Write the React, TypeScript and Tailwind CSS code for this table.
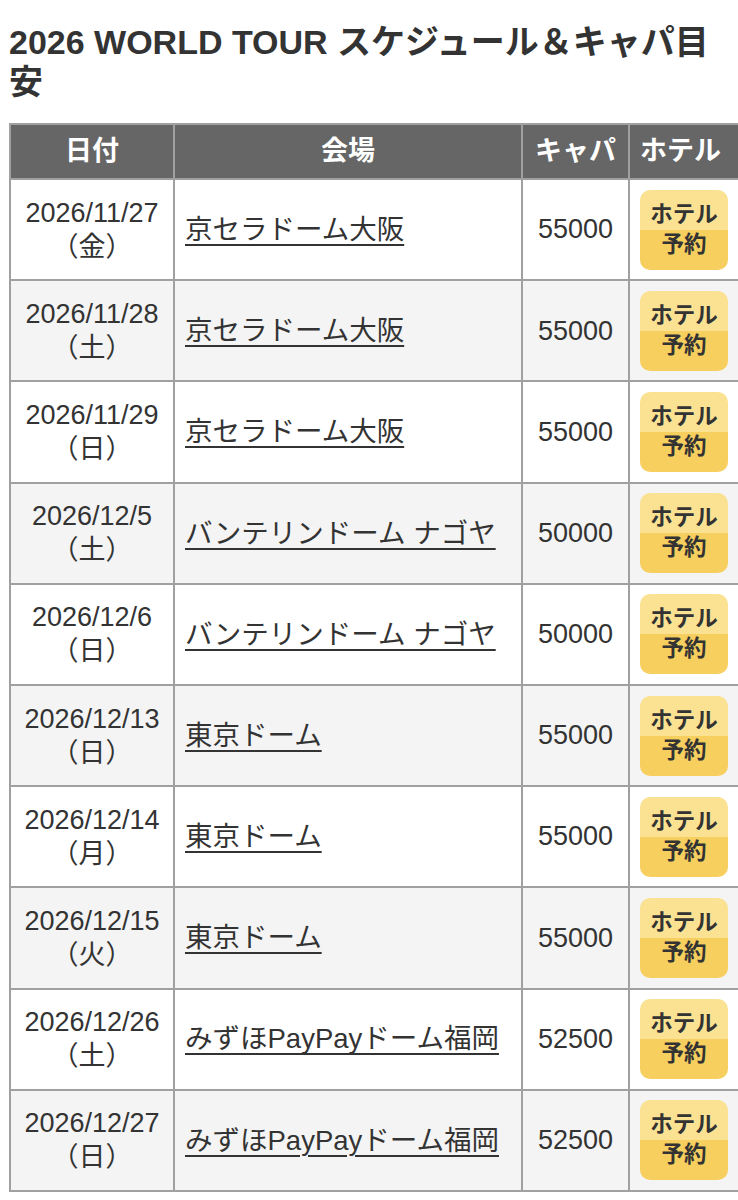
import React from "react"

type Show = {
  date: string
  day: string
  venue: string
  cap: string
}

const shows: Show[] = [
  { date: "2026/11/27", day: "金", venue: "京セラドーム大阪", cap: "55000" },
  { date: "2026/11/28", day: "土", venue: "京セラドーム大阪", cap: "55000" },
  { date: "2026/11/29", day: "日", venue: "京セラドーム大阪", cap: "55000" },
  { date: "2026/12/5", day: "土", venue: "バンテリンドーム ナゴヤ", cap: "50000" },
  { date: "2026/12/6", day: "日", venue: "バンテリンドーム ナゴヤ", cap: "50000" },
  { date: "2026/12/13", day: "日", venue: "東京ドーム", cap: "55000" },
  { date: "2026/12/14", day: "月", venue: "東京ドーム", cap: "55000" },
  { date: "2026/12/15", day: "火", venue: "東京ドーム", cap: "55000" },
  { date: "2026/12/26", day: "土", venue: "みずほPayPayドーム福岡", cap: "52500" },
  { date: "2026/12/27", day: "日", venue: "みずほPayPayドーム福岡", cap: "52500" },
]

function HotelButton() {
  return (
    <a
      href="#"
      className="flex h-[80px] w-[88px] flex-col items-center justify-center rounded-[10px] bg-[linear-gradient(#fbe293_50%,#f7cf5e_50%)] text-[22.5px] leading-[30px] font-bold text-[#333]"
    >
      <span>ホテル</span>
      <span>予約</span>
    </a>
  )
}

export default function App() {
  return (
    <div className="w-[738px] overflow-hidden bg-white font-['Liberation_Sans','Noto_Sans_CJK_JP',sans-serif] text-[#333]">
      <h2 className="w-[722px] pt-[22px] pl-[9px] text-[34px] leading-[40px] font-bold text-[#333]">
        2026 WORLD TOUR スケジュール＆キャパ目安
      </h2>

      <table className="mt-[21px] ml-[9px] w-[745px] table-fixed border-collapse">
        <colgroup>
          <col className="w-[164px]" />
          <col className="w-[348px]" />
          <col className="w-[107px]" />
          <col className="w-[126px]" />
        </colgroup>
        <thead>
          <tr className="h-[55px] bg-[#666] text-[27px] font-bold text-white">
            <th className="border-[2.5px] border-[#a0a0a0] text-center">日付</th>
            <th className="border-[2.5px] border-[#a0a0a0] text-center">会場</th>
            <th className="border-[2.5px] border-[#a0a0a0] text-center">キャパ</th>
            <th className="border-[2.5px] border-[#a0a0a0] pl-[10px] text-left">ホテル</th>
          </tr>
        </thead>
        <tbody>
          {shows.map((s, i) => (
            <tr
              key={s.date}
              className={
                i % 2 === 0
                  ? "h-[101.2px] bg-white text-[27px]"
                  : "h-[101.2px] bg-[#f4f4f4] text-[27px]"
              }
            >
              <td className="border-[2.5px] border-[#a0a0a0] text-center leading-[34px]">
                <div>{s.date}</div>
                <div>（{s.day}）</div>
              </td>
              <td className="border-[2.5px] border-[#a0a0a0] pl-[10px] text-[27.5px]">
                <a
                  href="#"
                  className="underline decoration-[2px] underline-offset-[5px]"
                >
                  {s.venue}
                </a>
              </td>
              <td className="border-[2.5px] border-[#a0a0a0] text-center">
                {s.cap}
              </td>
              <td className="border-[2.5px] border-[#a0a0a0] pl-[10px]">
                <HotelButton />
              </td>
            </tr>
          ))}
        </tbody>
      </table>
    </div>
  )
}
